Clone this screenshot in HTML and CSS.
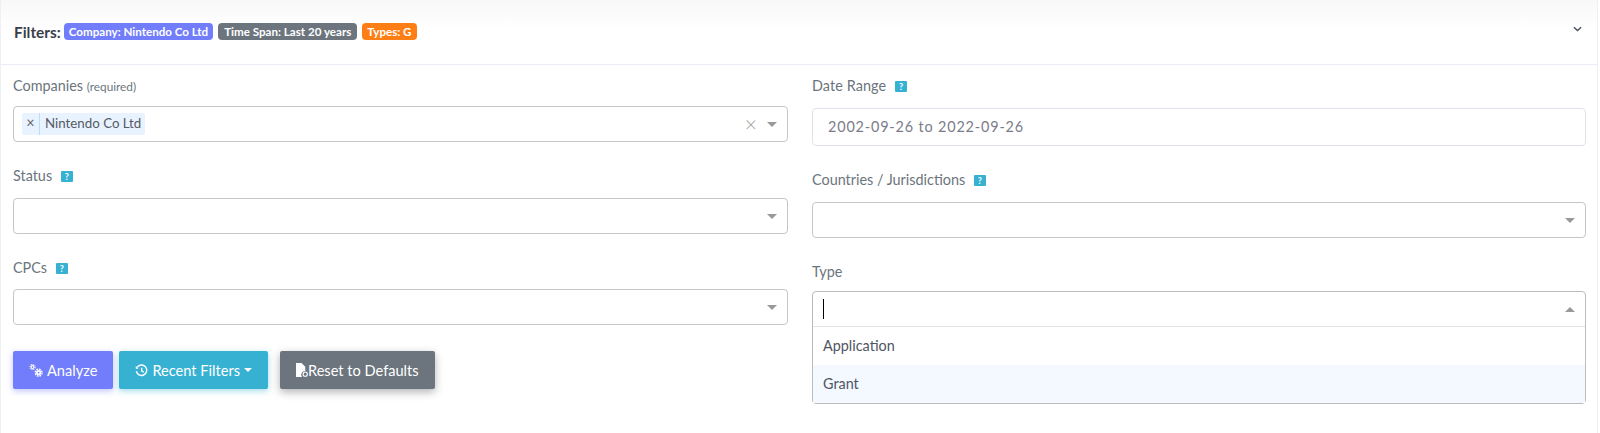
FILE: index.html
```html
<!DOCTYPE html>
<html lang="en">
<head>
    <meta charset="UTF-8">
    <title>Filters</title>
    <link rel="stylesheet" href="styles.css">
</head>
<body>
    <div class="card">
        <div class="card-header">
            <div class="filters">
                <strong>Filters:</strong>
                <span class="badge badge-primary">Company: Nintendo Co Ltd</span>
                <span class="badge badge-secondary">Time Span: Last 20 years</span>
                <span class="badge badge-warning">Types: G</span>
            </div>
            <svg class="chevron" viewBox="0 0 10 6" width="9" height="6"><path d="M1 1l4 3.6L9 1" fill="none" stroke="#4a5060" stroke-width="1.6"/></svg>
        </div>
        <div class="card-body">
            <div class="col">
                <div class="field field-companies">
                    <label>Companies <small>(required)</small></label>
                    <div class="select">
                        <span class="chip"><span class="chip-x">×</span><span class="chip-text">Nintendo Co Ltd</span></span>
                        <span class="clear">×</span>
                        <span class="arrow"></span>
                    </div>
                </div>
                <div class="field field-status">
                    <label>Status <span class="help">?</span></label>
                    <div class="select"><span class="arrow"></span></div>
                </div>
                <div class="field field-cpcs">
                    <label>CPCs <span class="help">?</span></label>
                    <div class="select"><span class="arrow"></span></div>
                </div>
                <div class="buttons">
                    <button class="btn btn-primary">
                        <svg viewBox="0 0 16 15" width="14" height="13" fill="none" stroke="#fff"><circle cx="4" cy="3.5" r="1.7" stroke-width="1.4"/><circle cx="4" cy="3.5" r="3" stroke-width="1.2" stroke-dasharray="1.18 1.18"/><circle cx="11" cy="10" r="2" stroke-width="2"/><circle cx="11" cy="10" r="4" stroke-width="1.5" stroke-dasharray="2 1.14"/></svg>
                        Analyze
                    </button>
                    <button class="btn btn-info">
                        <svg viewBox="0 0 14 14" width="13" height="13" fill="none" stroke="#fff" stroke-width="1.5"><path d="M2.4 3.6A5.6 5.6 0 1 1 1.5 7.6"/><path d="M7.2 4v3.4l2.200 1.4"/><path d="M.8 2v3h3z" fill="#fff" stroke="none"/></svg>
                        Recent Filters <span class="caret"></span>
                    </button>
                    <button class="btn btn-secondary btn-reset">
                        <svg viewBox="0 0 13 16" width="12" height="15"><path d="M0 0h6l4 4v4.5A4 4 0 0 0 6.5 15H0z" fill="#fff"/><circle cx="10" cy="12" r="2.3" fill="none" stroke="#fff" stroke-width="1.2"/></svg><span>Reset to Defaults</span>
                    </button>
                </div>
            </div>
            <div class="col">
                <div class="field field-date">
                    <label>Date Range <span class="help">?</span></label>
                    <div class="input">2002-09-26 to 2022-09-26</div>
                </div>
                <div class="field field-countries">
                    <label>Countries / Jurisdictions <span class="help">?</span></label>
                    <div class="select"><span class="arrow"></span></div>
                </div>
                <div class="field field-type">
                    <label>Type</label>
                    <div class="select-open">
                        <div class="search"><span class="cursor"></span><span class="arrow arrow-up"></span></div>
                        <div class="option">Application</div>
                        <div class="option option-active">Grant</div>
                    </div>
                </div>
            </div>
        </div>
    </div>
</body>
</html>
```

FILE: styles.css
```css
* {
    box-sizing: border-box;
}

html, body {
    margin: 0;
    height: 433px;
    overflow: hidden;
}

body {
    background-color: #fff;
    font-family: Lato, "Open Sans", sans-serif;
    font-size: 14.4px;
    color: #6e707e;
}

.card {
    height: 433px;
    margin-right: 2px;
    border-left: 1px solid #eef0f6;
    border-right: 1px solid #eef0f6;
}

.card-header {
    height: 65px;
    padding: 0 13px;
    display: flex;
    justify-content: space-between;
    align-items: center;
    border-bottom: 1px solid #e9ecf4;
    background: linear-gradient(#f8f8f9, #fff 30px);
}

.filters {
    display: flex;
    align-items: center;
    gap: 5px;
    color: #3a3d4a;
}

.filters strong {
    font-size: 15.4px;
    font-weight: 700;
    margin-right: -2px;
}

.chevron {
    margin-right: 2px;
    margin-bottom: 7px;
}

.badge {
    color: #fff;
    font-size: 11.6px;
    font-weight: 700;
    padding: 0 5px;
    height: 17px;
    line-height: 17px;
    border-radius: 4px;
    margin-top: -1px;
}

.badge-primary {
    background-color: #717dfa;
}

.badge-secondary {
    background-color: #6c757d;
    padding: 0 6px;
}

.badge-warning {
    background-color: #fd7e14;
}

.card-body {
    display: grid;
    grid-template-columns: 775px 774px;
    column-gap: 24px;
    padding: 12px 0 0 12px;
}

.field {
    display: flex;
    flex-direction: column;
}

.field label {
    height: 18px;
    line-height: 18px;
    margin-bottom: 11px;
    font-size: 14.4px;
    color: #6c757d;
}

.field small {
    font-size: 11.8px;
}

.help {
    display: inline-block;
    width: 12px;
    height: 11px;
    margin-left: 5px;
    background-color: #36b1d2;
    border-radius: 1px;
    color: #fff;
    font-size: 9px;
    font-weight: 700;
    line-height: 11px;
    text-align: center;
    vertical-align: 1px;
}

.field-status {
    margin-top: 25px;
}

.field-status label {
    margin-bottom: 13px;
}

.field-cpcs {
    margin-top: 25px;
}

.field-cpcs label {
    margin-bottom: 12px;
}

.field-date label {
    margin-bottom: 13px;
    letter-spacing: .1px;
}

.field-countries {
    margin-top: 25px;
}

.field-countries label {
    margin-bottom: 13px;
}

.field-type {
    margin-top: 25px;
}

.field-type label {
    margin-bottom: 10px;
}

.select {
    height: 36px;
    display: flex;
    align-items: center;
    padding: 0 8px;
    border: 1px solid #c4c6cc;
    border-radius: 4px;
    background-color: #fff;
}

.arrow {
    width: 0;
    height: 0;
    margin-left: auto;
    margin-right: 2px;
    border-left: 5.5px solid transparent;
    border-right: 5.5px solid transparent;
    border-top: 5px solid #999;
}

.arrow-up {
    border-top: none;
    border-bottom: 5px solid #999;
}

.clear {
    margin-left: auto;
    margin-right: 10px;
    color: #999;
    font-size: 21px;
    font-weight: 300;
    line-height: 18px;
}

.clear + .arrow {
    margin-left: 0;
}

.chip {
    display: flex;
    height: 22px;
    line-height: 20px;
    border-radius: 2px;
    background-color: #e8f3ff;
    color: #555a66;
}

.chip-x {
    width: 18px;
    text-align: center;
    border-right: 1px solid #bcdcf8;
    color: #666;
}

.chip-text {
    padding: 0 4px 0 5px;
    font-size: 13.3px;
}

.input {
    height: 38px;
    line-height: 36px;
    padding: 0 15px;
    border: 1px solid #dfe2ea;
    border-radius: 4px;
    letter-spacing: .85px;
    color: #7a7c89;
}

.select-open {
    height: 113px;
    border: 1px solid #bcbcbc;
    border-radius: 4px;
    color: #4f5562;
}

.search {
    height: 35px;
    display: flex;
    align-items: center;
    padding: 0 8px 0 10px;
    border-bottom: 1px solid #e4e4e4;
}

.cursor {
    width: 1px;
    height: 20px;
    background-color: #000;
}

.option {
    height: 38px;
    line-height: 37px;
    padding: 0 10px;
}

.option-active {
    background-color: #f3f9fe;
}

.buttons {
    display: flex;
    margin-top: 26px;
}

.btn {
    height: 38px;
    display: flex;
    align-items: center;
    gap: 4px;
    margin-right: 6px;
    padding: 0 16px;
    border: none;
    border-radius: 2px;
    color: #fff;
    font-family: inherit;
    font-size: 14.6px;
}

.btn-primary {
    background-color: #717dfa;
    box-shadow: 0 2px 6px rgba(113, 125, 250, .45);
}

.btn-info {
    background-color: #36b1d2;
    box-shadow: 0 2px 6px rgba(54, 177, 210, .45);
}

.btn-secondary {
    background-color: #6c757d;
    box-shadow: 0 3px 8px rgba(60, 60, 70, .4);
}

.btn-reset {
    margin-left: 6px;
    gap: 0;
}

.caret {
    width: 0;
    height: 0;
    border-left: 4px solid transparent;
    border-right: 4px solid transparent;
    border-top: 4px solid #fff;
}
```
